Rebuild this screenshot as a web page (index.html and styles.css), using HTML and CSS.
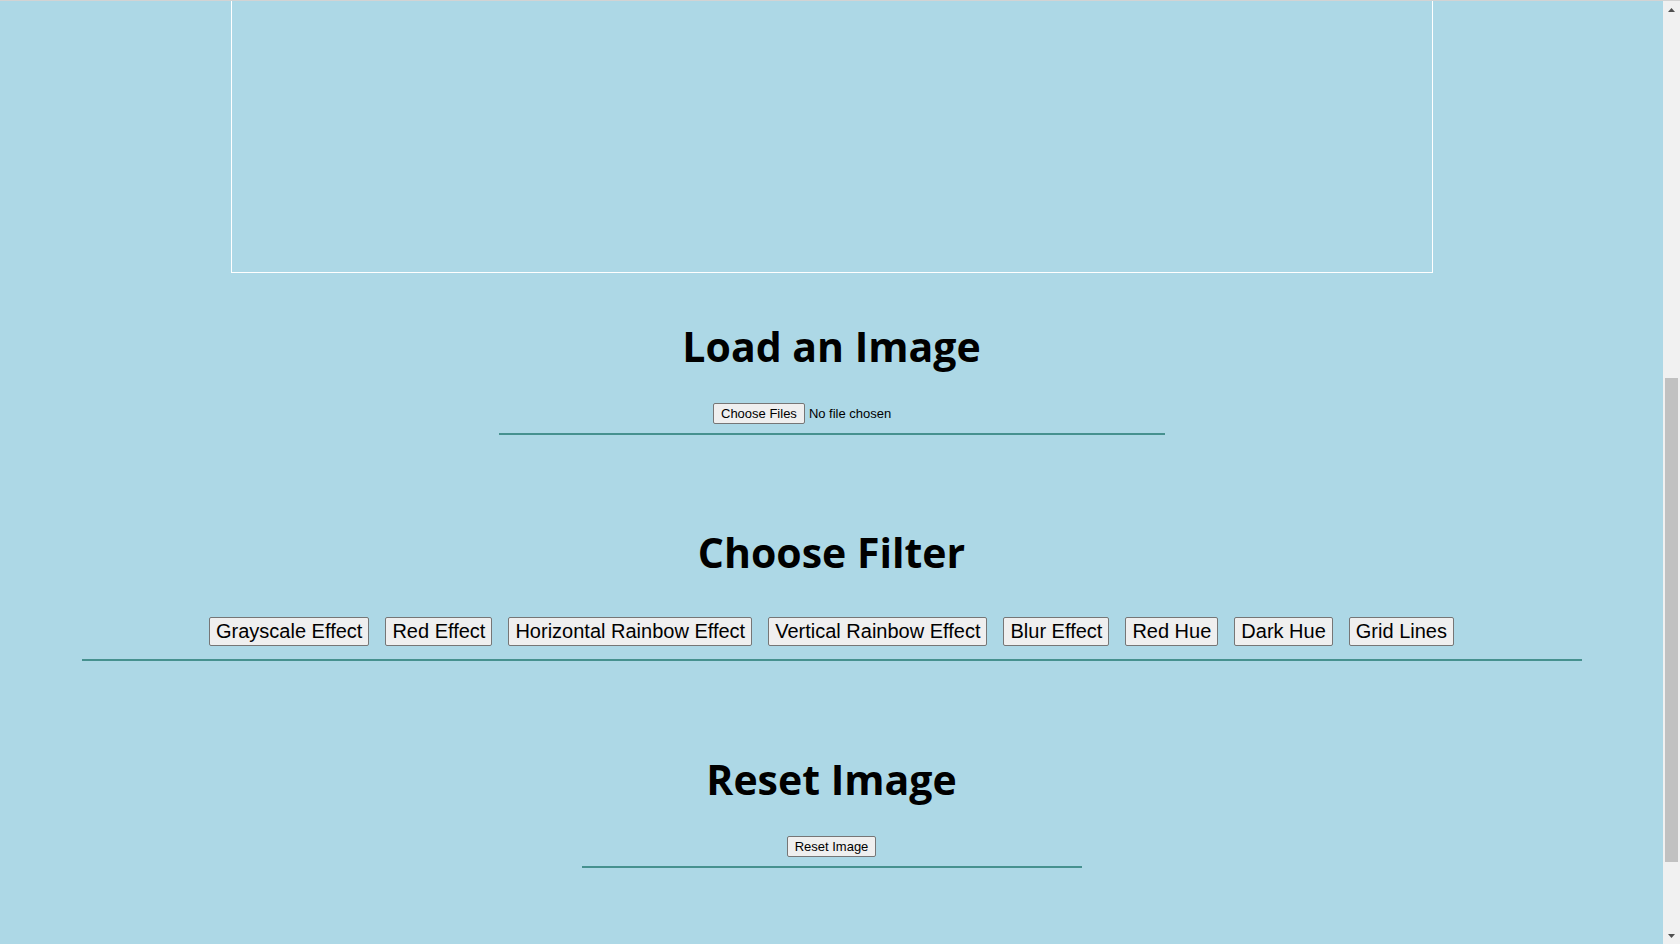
FILE: index.html
```html
<!DOCTYPE html>
<html lang="en">
<head>
<meta charset="utf-8">
<title>Image Filters</title>
<link rel="stylesheet" href="styles.css">
</head>
<body>
<div class="window">
  <main class="page">
    <div class="canvas-frame"></div>

    <section class="panel panel-load">
      <h2 class="panel-title">Load an Image</h2>
      <div class="controls">
        <input class="file-input" type="file" multiple accept="image/*">
      </div>
    </section>

    <section class="panel panel-filter">
      <h2 class="panel-title">Choose Filter</h2>
      <div class="controls">
        <button class="btn btn-lg" type="button">Grayscale Effect</button>
        <button class="btn btn-lg" type="button">Red Effect</button>
        <button class="btn btn-lg" type="button">Horizontal Rainbow Effect</button>
        <button class="btn btn-lg" type="button">Vertical Rainbow Effect</button>
        <button class="btn btn-lg" type="button">Blur Effect</button>
        <button class="btn btn-lg" type="button">Red Hue</button>
        <button class="btn btn-lg" type="button">Dark Hue</button>
        <button class="btn btn-lg" type="button">Grid Lines</button>
      </div>
    </section>

    <section class="panel panel-reset">
      <h2 class="panel-title">Reset Image</h2>
      <div class="controls">
        <button class="btn" type="button">Reset Image</button>
      </div>
    </section>
  </main>

  <div class="scrollbar" aria-hidden="true">
    <div class="sb-arrow">
      <svg width="7" height="4" viewBox="0 0 7 4"><path d="M0 4 L3.5 0 L7 4 Z" fill="#505050"/></svg>
    </div>
    <div class="sb-track"><div class="sb-thumb"></div></div>
    <div class="sb-arrow">
      <svg width="7" height="4" viewBox="0 0 7 4"><path d="M0 0 L3.5 4 L7 0 Z" fill="#505050"/></svg>
    </div>
  </div>
</div>
</body>
</html>
```

FILE: styles.css
```css
* {
  box-sizing: border-box;
}

html,
body {
  margin: 0;
  height: 100%;
}

body {
  background: #add8e6;
  font-family: "Liberation Sans", Arial, sans-serif;
  color: #000;
  overflow: hidden;
}

.window {
  display: flex;
  height: 100vh;
  border-top: 1px solid #d3d3d3;
}

.page {
  flex: 1;
  display: flex;
  flex-direction: column;
  align-items: center;
  min-width: 0;
}

.canvas-frame {
  width: 1202px;
  height: 272px;
  flex: none;
  border: 1px solid #fff;
  border-top: 0;
}

.panel {
  display: flex;
  flex-direction: column;
  align-items: center;
  border-bottom: 2px solid #46918f;
  flex: none;
}

.panel-title {
  margin: 0;
  font-family: "Open Sans", "DejaVu Sans", sans-serif;
  font-weight: 700;
  font-size: 41px;
  line-height: 56px;
  color: #000;
}

.controls {
  display: flex;
  justify-content: center;
  align-items: center;
  gap: 16px;
}

.panel-load {
  width: 666px;
  margin-top: 45px;
  padding-bottom: 9px;
}

.panel-load .controls {
  margin-top: 29px;
}

.panel-filter {
  width: 1500px;
  margin-top: 89px;
  padding-bottom: 13px;
}

.panel-filter .controls {
  margin-top: 37px;
}

.panel-reset {
  width: 500px;
  margin-top: 90px;
  padding-bottom: 9px;
}

.panel-reset .controls {
  margin-top: 29px;
}

.btn {
  font-family: "Liberation Sans", Arial, sans-serif;
  font-size: 13px;
  line-height: 15px;
  color: #000;
  background: #efefef;
  border: 1px solid #767676;
  border-radius: 2px;
  padding: 2px 7px;
  margin: 0;
}

.btn-lg {
  font-size: 20px;
  line-height: 23px;
  padding: 2px 6px;
}

.file-input {
  width: 237px;
  font-family: "Liberation Sans", Arial, sans-serif;
  font-size: 13px;
  line-height: 15px;
  color: #000;
}

.file-input::file-selector-button {
  font: inherit;
  color: #000;
  background: #efefef;
  border: 1px solid #767676;
  border-radius: 2px;
  padding: 2px 7px;
  margin: 0 4px 0 0;
}

.scrollbar {
  width: 17px;
  flex: none;
  display: flex;
  flex-direction: column;
  background: #f1f1f1;
}

.sb-arrow {
  height: 17px;
  flex: none;
  display: flex;
  align-items: center;
  justify-content: center;
}

.sb-track {
  flex: 1;
  padding: 0 2px;
}

.sb-thumb {
  margin-top: 360px;
  height: 484px;
  background: #c1c1c1;
}
```
